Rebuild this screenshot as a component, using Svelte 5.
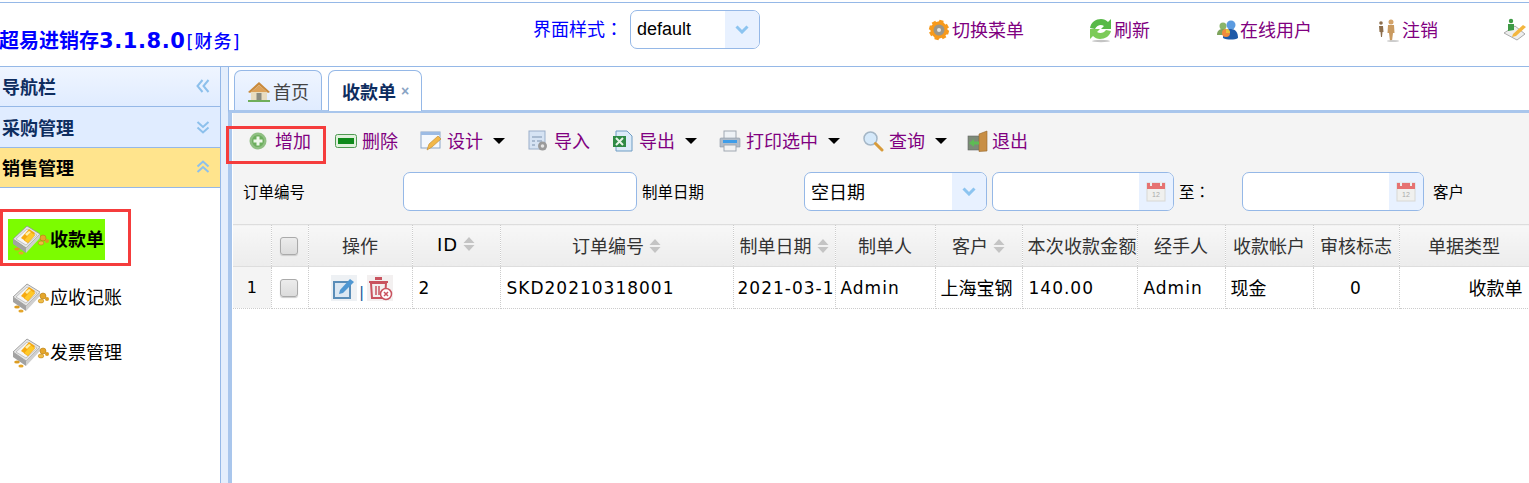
<script>
  const topLinks = ['切换菜单', '刷新', '在线用户', '注销'];
  const columns = [
    { title: '', w: 38 },
    { title: 'check', w: 37 },
    { title: '操作', w: 104 },
    { title: 'ID', w: 88, sort: true },
    { title: '订单编号', w: 233, sort: true },
    { title: '制单日期', w: 102, sort: true },
    { title: '制单人', w: 100 },
    { title: '客户', w: 87, sort: true },
    { title: '本次收款金额', w: 115, long: true },
    { title: '经手人', w: 88 },
    { title: '收款帐户', w: 88 },
    { title: '审核标志', w: 86 },
    { title: '单据类型', w: 130 }
  ];
  const tools = [
    { id: 'design', label: '设计', menu: true },
    { id: 'import', label: '导入' },
    { id: 'export', label: '导出', menu: true },
    { id: 'print', label: '打印选中', menu: true },
    { id: 'search', label: '查询', menu: true },
    { id: 'exit', label: '退出' }
  ];
  const menuItems = [
    { label: '收款单', active: true },
    { label: '应收记账' },
    { label: '发票管理' }
  ];
</script>

{#snippet chevrons(dir)}
  <svg class="chev" width="14" height="16" viewBox="0 0 14 16" fill="none" stroke="#8dc0ec" stroke-width="2">
    {#if dir === 'up'}
      <path d="M1.500 7.500 7 2.500l5.500 5M1.500 13 7 8l5.500 5" />
    {:else if dir === 'left'}
      <path d="M6.500 2 1.500 8l5 6M12.500 2l-5 6 5 6" />
    {:else}
      <path d="M1.500 3 7 8l5.500-5M1.500 8.500 7 13.500l5.500-5" />
    {/if}
  </svg>
{/snippet}

{#snippet combo()}
  <span class="arrow-box">
    <svg width="14" height="9" viewBox="0 0 14 9" fill="none" stroke="#8cc4f0" stroke-width="3"><path d="M1.500 1.500 7 7l5.500-5.500" /></svg>
  </span>
{/snippet}

{#snippet calendar()}
  <span class="arrow-box">
    <svg width="20" height="22" viewBox="0 0 20 22">
      <rect x="1" y="3" width="18" height="18" fill="#f0f0ee" stroke="#d8d8d4" />
      <rect x="1" y="3" width="18" height="6" fill="#e67272" />
      <rect x="4" y="1" width="2" height="5" fill="#eee" />
      <rect x="14" y="1" width="2" height="5" fill="#eee" />
      <text x="6" y="17" font-size="7" fill="#aaa" font-family="Liberation Sans, sans-serif">12</text>
    </svg>
  </span>
{/snippet}

{#snippet money()}
  <svg class="money" width="37" height="31" viewBox="0 0 37 31">
    <path d="M1 15 15 2l13 8-14 14z" fill="#e4e4e4" stroke="#8f8f8f" stroke-width=".8" />
    <path d="M1 15v5l13 9v-5z" fill="#a2a2a2" />
    <path d="M14 24v5l14-15v-4z" fill="#cfcfcf" />
    <path d="M4 15 15 5l10 6-11 10z" fill="#f5f5f5" stroke="#a8a8a8" stroke-width=".6" />
    <path d="M9 14 17 5l6 4-8 9z" fill="#f7a90f" />
    <path d="M12 16 19 8l4 3-7 8z" fill="#ffc928" stroke="#e89a10" stroke-width=".5" />
    <path d="M13 10l4-3 2 1-4 4z" fill="#fff0a8" />
    <circle cx="31" cy="14" r="3" fill="#e5a62b" stroke="#b57d14" stroke-width=".6" />
    <circle cx="35" cy="17" r="2" fill="#dc9c22" />
    <ellipse cx="29" cy="19" rx="2.800" ry="2" fill="#efbc46" stroke="#b57d14" stroke-width=".5" />
    <ellipse cx="5" cy="25" rx="2.800" ry="1.600" fill="#dc9c22" />
    <ellipse cx="9" cy="29" rx="2.600" ry="1.500" fill="#e5a62b" />
  </svg>
{/snippet}

{#snippet sortMark()}
  <svg class="sort" width="12" height="14" viewBox="0 0 12 14" fill="#c4c4c4"><path d="M6 0l5.500 6H.5zM6 14 .5 8h11z" /></svg>
{/snippet}

{#snippet topIcon(name)}
  <svg width="24" height="26" viewBox="0 0 24 26">
    {#if name === '切换菜单'}
      <g fill="#f79a1c" transform="rotate(15 12 13) translate(0 1)">
        <circle cx="12" cy="12" r="8.500" />
        <path d="M10 2h4l1 4H9zM18 4l3 3-3 3-3-3zM22 10v4l-4 1v-6zM21 17l-3 3-3-3 3-3zM14 22h-4l-1-4h6zM6 20l-3-3 3-3 3 3zM2 14v-4l4-1v6zM3 7l3-3 3 3-3 3z" />
      </g>
      <circle cx="12" cy="13" r="5.500" fill="#9a968a" />
      <circle cx="12" cy="13" r="2" fill="#e4e4e0" />
    {:else if name === '刷新'}
      <path d="M1 11C2 5 7 2 12 2c3 0 5 1 7 3l3-3v10H12l3-3c-3-2-7-1-9 3z" fill="#58b948" />
      <path d="M22 14c-1 5-6 8-11 8-3 0-5-1-7-3l-3 3V12h10l-3 3c3 2 7 1 9-2z" fill="#7ccb58" />
      <ellipse cx="12" cy="24" rx="9" ry="1.200" fill="#c4c4c4" />
    {:else if name === '在线用户'}
      <circle cx="8" cy="9" r="3.500" fill="#8ab56a" />
      <path d="M2 18c0-5 3-6 6-6s5 2 5 6z" fill="#7ea45c" />
      <circle cx="16" cy="8" r="4.500" fill="#5b9be0" />
      <path d="M8 21c0-7 4-9 8-9s7 3 7 9c-3 2-11 2-15 0z" fill="#1e5aa8" />
      <circle cx="11" cy="16" r="4" fill="#f08a3c" />
      <path d="M11 12v4h4a4 4 0 0 0-4-4z" fill="#e8c23a" />
    {:else}
      <circle cx="14" cy="5" r="2.500" fill="#d3a369" />
      <path d="M11 8h6l.5 8h-1.500l-1 8h-2l-1-8h-1.500z" fill="#c99a60" />
      <circle cx="4" cy="6" r="1.800" fill="#8d6e4c" />
      <path d="M2 9h4l.5 6h-1l-.5 5H4l-.5-5h-1z" fill="#8d6e4c" />
      <ellipse cx="16" cy="24" rx="6" ry="1" fill="#ccc" />
    {/if}
  </svg>
{/snippet}

{#snippet toolIcon(id)}
  <svg width="22" height="22" viewBox="0 0 22 22">
    {#if id === 'design'}
      <rect x="1" y="2" width="19" height="16" fill="#f4f8fd" stroke="#8ba6c7" />
      <rect x="1" y="2" width="19" height="3" fill="#9cbbe4" />
      <path d="M7 20l2-6 9-8 3 3-9 8z" fill="#f2b84a" stroke="#bd862a" stroke-width=".6" />
    {:else if id === 'import'}
      <rect x="2" y="1" width="16" height="18" fill="#d6e3f3" stroke="#99aec9" />
      <path d="M5 6h10v2H5zM5 10h3v2H5zM5 14h3v2H5zM10 10h5v2h-5z" fill="#a8bad0" />
      <circle cx="15.500" cy="16" r="4.500" fill="#9a9a9a" />
      <circle cx="15.500" cy="16" r="1.800" fill="#e4e4e4" />
    {:else if id === 'export'}
      <path d="M4 1h11l5 5v15H4z" fill="#dcebf8" stroke="#6f9cc4" />
      <path d="M1 6h13v11H1z" fill="#2f8a45" />
      <path d="M4 8l7 7M11 8l-7 7" stroke="#e7f4e8" stroke-width="2" />
    {:else if id === 'print'}
      <rect x="5" y="1" width="12" height="8" fill="#eef2f6" stroke="#a0a8b2" />
      <path d="M2 8h18a1 1 0 0 1 1 1v8H1V9a1 1 0 0 1 1-1z" fill="#b2bcc8" stroke="#8e98a4" stroke-width=".6" />
      <rect x="4" y="10" width="14" height="3" fill="#3f9de8" />
      <rect x="5" y="15" width="12" height="6" fill="#f2f2f2" stroke="#a0a8b2" />
    {:else if id === 'search'}
      <circle cx="8.500" cy="8.500" r="6.500" fill="#d5e9fa" stroke="#a4b6c6" stroke-width="1.500" />
      <path d="M13.500 13.500 20 20" stroke="#d89b3a" stroke-width="3" stroke-linecap="round" />
    {:else}
      <rect x="1" y="6" width="13" height="14" fill="#7c8a78" stroke="#666" stroke-width=".6" />
      <path d="M12 4l8-3v20l-8 .5z" fill="#c88f45" stroke="#94662c" stroke-width=".6" />
      <path d="M2 13l5-4v2.500h5v3H7V17z" fill="#5dbb54" />
    {/if}
  </svg>
{/snippet}

<div class="page">
  <header class="top">
    <div class="brand"><b>超易进销存<span class="ver">3.1.8.0</span></b><span class="role">[财务]</span></div>
    <div class="theme">
      <span class="theme-label">界面样式<span class="colon">：</span></span>
      <span class="combo theme-combo"><span class="combo-text">default</span>{@render combo()}</span>
    </div>
    <nav class="links">
      {#each topLinks as link}
        <a class="link" href="#top">{@render topIcon(link)}<span class="cjk-up">{link}</span></a>
      {/each}
      <a class="link" href="#top">
        <svg width="26" height="26" viewBox="0 0 26 26">
          <path d="M1 16 12 9l10 8-8 6z" fill="#eee" stroke="#aaa" />
          <circle cx="8" cy="4" r="2.200" fill="#3e9a45" />
          <path d="M5 14V7h6v6z" fill="#3e9a45" />
          <path d="M10 17 20 8l3 2-10 9-4 1z" fill="#f3b63f" />
        </svg>
      </a>
    </nav>
  </header>

  <div class="body">
    <aside class="side">
      <div class="acc-head nav-head"><span>导航栏</span>{@render chevrons('left')}</div>
      <div class="acc-head second"><span>采购管理</span>{@render chevrons('down')}</div>
      <div class="acc-head open"><span>销售管理</span>{@render chevrons('up')}</div>
      <ul class="menu">
        {#each menuItems as item}
          <li class="menu-item" class:active={item.active}>
            <span class="menu-inner">{@render money()}<span class="menu-label">{item.label}</span></span>
          </li>
        {/each}
      </ul>
    </aside>

    <div class="split"></div>

    <main class="main">
      <div class="tabs">
        <div class="tab">
          <svg width="24" height="22" viewBox="0 0 24 22">
            <path d="M4 11h16v9H4z" fill="#e8dcc0" />
            <path d="M12 2 1 12l2 1 9-8 9 8 2-1z" fill="#c98a3c" />
            <path d="M12 5 4 12h16z" fill="#dca25a" />
            <rect x="9.500" y="13" width="5" height="7" fill="#8b8b80" />
            <path d="M1 20h22v2H1z" fill="#6fae5a" />
          </svg>
          <span>首页</span>
        </div>
        <div class="tab current"><span>收款单</span><i class="close">×</i></div>
      </div>
      <div class="panel">
        <div class="toolbar">
          <button class="tool add">
            <svg width="18" height="18" viewBox="0 0 18 18">
              <circle cx="9" cy="9" r="8.500" fill="#8fbf82" />
              <circle cx="9" cy="9" r="6" fill="#6cae5d" />
              <path d="M7.500 4.500h3v3h3v3h-3v3h-3v-3h-3v-3h3z" fill="#eef7ea" />
            </svg>
            <span class="cjk-up">增加</span>
          </button>
          <button class="tool">
            <svg width="22" height="14" viewBox="0 0 22 14">
              <rect x=".5" y=".5" width="21" height="13" rx="2" fill="#e0f0dc" stroke="#4f9a52" />
              <rect x="3" y="4" width="16" height="6" fill="#0e8a1a" />
            </svg>
            <span class="cjk-up">删除</span>
          </button>
          {#each tools as t}
            <button class="tool" class:tool-exit={t.id === 'exit'}>
              {@render toolIcon(t.id)}
              <span class="cjk-up">{t.label}</span>
              {#if t.menu}<i class="caret"></i>{/if}
            </button>
          {/each}
        </div>

        <div class="filters">
          <span class="flabel l1">订单编号</span>
          <span class="input w1"></span>
          <span class="flabel l2">制单日期</span>
          <span class="combo w2"><span class="combo-text">空日期</span>{@render combo()}</span>
          <span class="combo w3"><span class="combo-text"></span>{@render calendar()}</span>
          <span class="flabel l3">至<span class="colon">：</span></span>
          <span class="combo w4"><span class="combo-text"></span>{@render calendar()}</span>
          <span class="flabel l4">客户</span>
        </div>

        <table class="grid">
          <colgroup>
            {#each columns as c}<col style="width: {c.w}px" />{/each}
          </colgroup>
          <thead>
            <tr>
              {#each columns as c}
                <th class:long={c.long}>
                  {#if c.title === 'check'}
                    <i class="check"></i>
                  {:else}
                    <span class="cjk-up" class:latin={c.title === 'ID'}>{c.title}</span>{#if c.sort}{@render sortMark()}{/if}
                  {/if}
                </th>
              {/each}
            </tr>
          </thead>
          <tbody>
            <tr>
              <td class="rownum">1</td>
              <td class="center"><i class="check"></i></td>
              <td class="ops">
                <div class="ops-row">
                  <svg width="26" height="26" viewBox="0 0 26 26">
                    <rect width="26" height="26" fill="#eef1f4" />
                    <rect x="3" y="7" width="16" height="16" fill="#dbe7f2" stroke="#5a8db8" stroke-width="2" />
                    <path d="M8 19l1-4 10-11 4 3-11 11z" fill="#4f97d2" />
                  </svg>
                  <span class="bar">|</span>
                  <svg width="26" height="26" viewBox="0 0 26 26">
                    <rect width="26" height="26" fill="#f3f0f0" />
                    <path d="M2 6h19v2H2zM8 2h7v3H8z" fill="#c9535f" />
                    <path d="M4 8h15l-1 15H5z" fill="none" stroke="#c9535f" stroke-width="2" />
                    <path d="M9 11v9M12 11v9" stroke="#c9535f" stroke-width="1.500" />
                    <circle cx="19" cy="19" r="5.500" fill="#fff" stroke="#c9535f" stroke-width="1.500" />
                    <path d="M17 17l4 4M21 17l-4 4" stroke="#c9535f" stroke-width="1.500" />
                  </svg>
                </div>
              </td>
              <td class="latin">2</td>
              <td class="latin">SKD20210318001</td>
              <td class="latin clip"><span class="clip-box">2021-03-18</span></td>
              <td class="latin name">Admin</td>
              <td class="center city"><span class="cjk-up">上海宝钢</span></td>
              <td class="latin">140.00</td>
              <td class="latin">Admin</td>
              <td class="cash"><span class="cjk-up">现金</span></td>
              <td class="latin center">0</td>
              <td class="right"><span class="cjk-up">收款单</span></td>
            </tr>
          </tbody>
        </table>
      </div>
    </main>
  </div>

  <span class="mark mark-add"></span>
  <span class="mark mark-menu"></span>
</div>

<style>
  :global(body) {
    margin: 0;
    background: #fff;
  }

  .page {
    position: relative;
    width: 1529px;
    height: 483px;
    overflow: hidden;
    font-family: "Liberation Sans", "Noto Sans CJK SC", sans-serif;
    color: #000;
  }

  /* Noto sits a pixel lower than the font in the reference */
  .cjk-up {
    display: inline-block;
    padding-bottom: 2px;
  }

  .top {
    display: flex;
    align-items: flex-start;
    box-sizing: border-box;
    height: 65px;
    margin-top: 2px;
    border-top: 1px solid #95b8e7;
    border-bottom: 1px solid #95b8e7;
  }

  .brand {
    width: 533px;
    flex: none;
    box-sizing: border-box;
    margin-left: -1px;
    padding-top: 22px;
    color: #0000ff;
    white-space: nowrap;
    font-family: "DejaVu Sans", "Noto Sans CJK SC", sans-serif;
  }

  .brand b {
    font-size: 20px;
  }

  .ver {
    font-size: 21px;
    letter-spacing: .6px;
  }

  .role {
    margin-left: 1px;
    font-size: 18px;
    font-weight: 500;
    letter-spacing: 1px;
  }

  .theme {
    display: flex;
    align-items: center;
    flex: none;
    width: 394px;
    margin-left: 1px;
    padding-top: 7px;
  }

  .theme-label {
    width: 97px;
    padding-bottom: 3px;
    color: #0000ff;
    font-size: 18px;
    white-space: nowrap;
  }

  .colon {
    font-family: "Noto Sans CJK TC", sans-serif;
  }

  .combo {
    display: inline-flex;
    box-sizing: border-box;
    height: 39px;
    overflow: hidden;
    background: #fff;
    border: 1px solid #95b8e7;
    border-radius: 7px;
  }

  .theme-combo {
    width: 130px;
  }

  .combo-text {
    flex: 1;
    align-self: center;
    padding-left: 6px;
    font-size: 18px;
  }

  .arrow-box {
    display: flex;
    align-items: center;
    justify-content: center;
    width: 34px;
    background: #e8f1ff;
  }

  .links {
    display: flex;
    padding-top: 13px;
  }

  .link {
    display: flex;
    align-items: center;
    gap: 1px;
    margin-right: 65px;
    color: #800080;
    font-size: 18px;
    text-decoration: none;
    white-space: nowrap;
  }

  .body {
    display: flex;
    height: 416px;
  }

  .side {
    flex: none;
    width: 220px;
    border-right: 1px solid #95b8e7;
  }

  .acc-head {
    display: flex;
    align-items: center;
    justify-content: space-between;
    box-sizing: border-box;
    height: 40px;
    padding: 0 10px 1px 2px;
    background: #e0ecff;
    border-bottom: 1px solid #95b8e7;
    color: #0e2d5f;
    font-size: 18px;
    font-weight: 700;
  }

  .nav-head {
    background: linear-gradient(#eff5ff, #e0ecff);
  }

  .second {
    height: 41px;
  }

  .open {
    background: #ffe48d;
    color: #000;
  }

  .menu {
    margin: 0;
    padding: 31px 0 0 0;
    list-style: none;
  }

  .menu-item {
    height: 55px;
    padding-left: 8px;
    font-size: 18px;
  }

  .menu-item.active {
    margin-bottom: 3px;
  }

  .menu-inner {
    display: inline-flex;
    align-items: center;
    height: 41px;
    padding-right: 1px;
  }

  .menu-inner .money {
    margin: 0 1px 0 4px;
  }

  .menu-label {
    padding-bottom: 4px;
  }

  .active .menu-inner {
    background: #7cfc00;
    font-weight: 700;
  }

  .split {
    flex: none;
    width: 7px;
    background: #e4eefc;
  }

  .main {
    flex: 1;
    min-width: 0;
  }

  .tabs {
    display: flex;
    gap: 6px;
    box-sizing: border-box;
    height: 46px;
    padding: 3px 0 0 5px;
    border-left: 1px solid #95b8e7;
    border-bottom: 3px solid #a9c6ec;
  }

  .tab {
    display: flex;
    align-items: center;
    box-sizing: border-box;
    width: 88px;
    height: 40px;
    padding: 0 0 0 12px;
    gap: 2px;
    background: linear-gradient(#eff5ff, #e0ecff);
    border: 1px solid #95b8e7;
    border-bottom: 0;
    border-radius: 7px 7px 0 0;
    color: #444;
    font-size: 18px;
  }

  .tab.current {
    width: 94px;
    padding-left: 13px;
    gap: 5px;
    height: 41px;
    background: #fff;
    color: #0e2d5f;
    font-weight: 700;
  }

  .close {
    color: #8aa4c4;
    font-style: normal;
    font-size: 14px;
  }

  .panel {
    height: 370px;
    padding-left: 1px;
    border-left: 4px solid #a9c6ec;
  }

  .toolbar {
    display: flex;
    align-items: center;
    box-sizing: border-box;
    height: 56px;
    padding: 0 0 0 16px;
    gap: 22px;
    background: #f4f4f4;
  }

  .tool {
    display: flex;
    align-items: center;
    gap: 5px;
    padding: 0;
    background: none;
    border: 0;
    color: #800080;
    font: inherit;
    font-size: 18px;
    white-space: nowrap;
  }

  .add {
    gap: 8px;
    margin-right: 2px;
  }

  .tool-exit {
    margin-left: -2px;
    gap: 3px;
  }

  .caret {
    width: 0;
    height: 0;
    margin-left: 5px;
    border: 6px solid transparent;
    border-top: 6px solid #000;
    border-bottom: 0;
  }

  .filters {
    display: flex;
    align-items: center;
    box-sizing: border-box;
    height: 55px;
    padding: 0 0 11px 10px;
    background: #f4f4f4;
    white-space: nowrap;
  }

  .flabel {
    font-size: 15.500px;
  }

  .l1 { width: 160px; }
  .l2 { width: 162px; margin-left: 5px; }
  .l3 { width: 63px; margin-left: 5px; }
  .l4 { margin-left: 9px; }

  .input {
    box-sizing: border-box;
    height: 39px;
    background: #fff;
    border: 1px solid #95b8e7;
    border-radius: 7px;
  }

  .w1 { width: 234px; }
  .w2 { width: 183px; }
  .w3 { width: 182px; margin-left: 5px; }
  .w4 { width: 182px; }

  .grid {
    width: 1296px;
    table-layout: fixed;
    border-collapse: collapse;
    white-space: nowrap;
  }

  th {
    box-sizing: border-box;
    height: 42px;
    padding: 0;
    overflow: hidden;
    background: linear-gradient(#f7f7f7, #ececec);
    border-top: 1px solid #ddd;
    border-bottom: 1px solid #ddd;
    border-right: 1px dotted #ccc;
    color: #333;
    font-size: 18px;
    font-weight: 400;
    text-align: center;
  }

  th.long {
    padding-left: 5px;
    text-align: left;
    letter-spacing: .2px;
  }

  th .latin {
    font-family: "DejaVu Sans", sans-serif;
    color: #000;
    letter-spacing: 1px;
  }

  .sort {
    margin-left: 5px;
  }

  td {
    box-sizing: border-box;
    height: 42px;
    padding: 0 6px;
    overflow: hidden;
    border-right: 1px dotted #ccc;
    border-bottom: 1px dotted #ccc;
    font-size: 18px;
  }

  td.latin {
    font-family: "DejaVu Sans", sans-serif;
    font-size: 17px;
    letter-spacing: 1px;
  }

  td.clip {
    padding: 0 0 0 4px;
  }

  .clip-box {
    display: block;
    overflow: hidden;
  }

  td.name {
    padding-left: 5px;
  }

  .rownum {
    padding: 0;
    background: #f4f4f4;
    font-family: "DejaVu Sans", sans-serif;
    font-size: 16px;
    text-align: center;
  }

  .center {
    text-align: center;
    padding: 0;
  }

  td.latin.center {
    padding: 0;
  }

  .city {
    padding-right: 4px;
  }

  .cash {
    padding-left: 5px;
  }

  .right {
    text-align: right;
  }

  .center .check,
  th .check {
    margin-right: 2px;
  }

  .ops {
    padding: 0 0 0 22px;
  }

  .ops-row {
    display: flex;
    align-items: center;
    gap: 3px;
  }

  .bar {
    padding-top: 10px;
    color: #1d5c9c;
    font-size: 16px;
  }

  .check {
    display: inline-block;
    box-sizing: border-box;
    width: 18px;
    height: 18px;
    vertical-align: middle;
    background: linear-gradient(#ececec, #dcdcdc);
    border: 1px solid #aaa;
    border-radius: 3px;
    box-shadow: 0 1px 1px #ccc;
  }

  .mark {
    position: absolute;
    box-sizing: border-box;
    border: 3px solid #f53c3c;
  }

  .mark-add {
    left: 226px;
    top: 126px;
    width: 100px;
    height: 38px;
  }

  .mark-menu {
    left: 0;
    top: 209px;
    width: 131px;
    height: 57px;
  }
</style>
